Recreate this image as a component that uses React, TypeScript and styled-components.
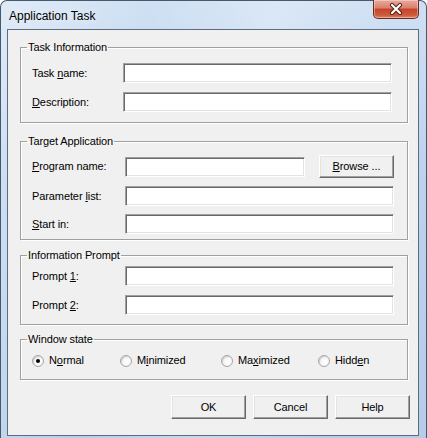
import React from 'react';
import styled, { createGlobalStyle } from 'styled-components';

const GlobalStyle = createGlobalStyle`
  html, body {
    margin: 0;
    padding: 0;
    background: #ffffff;
  }
`;

const Frame = styled.div`
  width: 427px;
  height: 438px;
  box-sizing: border-box;
  display: flex;
  flex-direction: column;
  padding: 0 7px 2px 6px;
  border: 1px solid #44586e;
  border-bottom: none;
  border-radius: 7px 7px 0 0;
  background:
    linear-gradient(100deg, rgba(255, 255, 255, 0.35) 0%, rgba(255, 255, 255, 0) 30%, rgba(255, 255, 255, 0.25) 55%, rgba(255, 255, 255, 0) 80%),
    linear-gradient(180deg, #cfe0f3 0%, #bcd3ee 40%, #b6cdea 100%);
  font-family: "Liberation Sans", Arial, sans-serif;
`;

const TitleBar = styled.div`
  height: 28px;
  display: flex;
  align-items: flex-start;
  justify-content: space-between;
`;

const Title = styled.span`
  margin: 8px 0 0 2px;
  font-size: 12px;
  line-height: 14px;
  color: #000;
  text-shadow: 0 0 8px rgba(255, 255, 255, 0.9);
`;

const CloseButton = styled.div`
  width: 44px;
  height: 18px;
  margin: -1px 0 0 0;
  display: flex;
  align-items: center;
  justify-content: center;
  border: 1px solid #6b2b20;
  border-top: none;
  border-radius: 0 0 5px 5px;
  background: linear-gradient(180deg, #e9a99c 0%, #d9806c 45%, #c6422a 50%, #cf5b3c 85%, #e0876a 100%);
  box-shadow: inset 0 0 0 1px rgba(255, 255, 255, 0.35);
`;

const Client = styled.div`
  flex: 1;
  display: flex;
  flex-direction: column;
  padding: 0 10px 0 12px;
  border: 1px solid #5d6c7e;
  background: #f0f0f0;
  font-size: 11px;
  letter-spacing: -0.1px;
  color: #000;
`;

const Group = styled.fieldset<{ $top: number; $pt: number; $pb: number; $pr: number }>`
  margin: ${(p) => p.$top}px 0 0 0;
  padding: ${(p) => p.$pt}px ${(p) => p.$pr}px ${(p) => p.$pb}px 11px;
  min-width: 0;
  border: 1px solid #a0a0a0;
  box-shadow: inset 1px 1px 0 #ffffff, 1px 1px 0 #ffffff;
  display: flex;
  flex-direction: column;
`;

const Legend = styled.legend`
  margin-left: -5px;
  padding: 0 1px;
  font-size: 11px;
  line-height: 13px;
`;

const Row = styled.div<{ $label: number; $gap?: number; $h?: number }>`
  display: grid;
  grid-template-columns: ${(p) => p.$label}px 1fr;
  align-items: center;
  height: ${(p) => p.$h ?? 20}px;
  margin-top: ${(p) => p.$gap ?? 0}px;
`;

const Label = styled.label`
  line-height: 13px;
  white-space: nowrap;
`;

const Field = styled.div`
  display: flex;
  align-items: center;
  gap: 14px;
`;

const Input = styled.div`
  flex: 1;
  height: 20px;
  box-sizing: border-box;
  background: #ffffff;
  border: 1px solid;
  border-color: #a0a0a0 #ffffff #ffffff #a0a0a0;
  box-shadow: inset 1px 1px 0 #696969, inset -1px -1px 0 #e3e3e3;
`;

const Button = styled.div<{ $w: number; $h: number }>`
  width: ${(p) => p.$w}px;
  height: ${(p) => p.$h}px;
  box-sizing: border-box;
  display: flex;
  align-items: center;
  justify-content: center;
  background: #f0f0f0;
  border: 1px solid;
  border-color: #ffffff #696969 #696969 #ffffff;
  box-shadow: inset -1px -1px 0 #a0a0a0, inset 1px 1px 0 #e3e3e3;
  line-height: 13px;
`;

const RadioRow = styled.div`
  display: grid;
  grid-template-columns: 88px 101px 97px 1fr;
  height: 13px;
  align-items: center;
`;

const RadioOption = styled.div`
  display: flex;
  align-items: center;
  gap: 5px;
  line-height: 13px;
`;

const RadioDot = styled.span<{ $on?: boolean }>`
  width: 12px;
  height: 12px;
  box-sizing: border-box;
  border-radius: 50%;
  display: inline-flex;
  align-items: center;
  justify-content: center;
  background: radial-gradient(circle at 60% 60%, #ffffff 0%, #f4f4f4 55%, #dcdcdc 100%);
  border: 1px solid #a7a7a7;
  box-shadow: inset 1px 1px 1px rgba(0, 0, 0, 0.12);

  &::after {
    content: '';
    width: 4px;
    height: 4px;
    border-radius: 50%;
    background: ${(p) => (p.$on ? '#000' : 'transparent')};
  }
`;

const ButtonBar = styled.div`
  display: flex;
  justify-content: flex-end;
  gap: 7px;
  margin: 15px -2px 0 0;
`;

const Key = styled.span`
  text-decoration: underline;
  text-underline-offset: 1px;
`;

const CloseGlyph = () => (
  <svg width="14" height="12" viewBox="0 0 14 12">
    <path d="M3 2 L11 10 M11 2 L3 10" stroke="#4a1c14" strokeWidth="4" strokeLinecap="round" />
    <path d="M3 2 L11 10 M11 2 L3 10" stroke="#ffffff" strokeWidth="2.2" strokeLinecap="round" />
  </svg>
);

const App: React.FC = () => {
  return (
    <>
      <GlobalStyle />
      <Frame>
        <TitleBar>
          <Title>Application Task</Title>
          <CloseButton>
            <CloseGlyph />
          </CloseButton>
        </TitleBar>
        <Client>
          <Group $top={11} $pt={9} $pb={10} $pr={15}>
            <Legend>Task Information</Legend>
            <Row $label={91}>
              <Label>Task <Key>n</Key>ame:</Label>
              <Input />
            </Row>
            <Row $label={91} $gap={9}>
              <Label><Key>D</Key>escription:</Label>
              <Input />
            </Row>
          </Group>

          <Group $top={12} $pt={7} $pb={5} $pr={13}>
            <Legend>Target Application</Legend>
            <Row $label={93} $h={23}>
              <Label><Key>P</Key>rogram name:</Label>
              <Field>
                <Input />
                <Button $w={75} $h={23}><span><Key>B</Key>rowse ...</span></Button>
              </Field>
            </Row>
            <Row $label={93} $gap={8}>
              <Label>Parameter <Key>l</Key>ist:</Label>
              <Input />
            </Row>
            <Row $label={93} $gap={8}>
              <Label><Key>S</Key>tart in:</Label>
              <Input />
            </Row>
          </Group>

          <Group $top={9} $pt={4} $pb={9} $pr={13}>
            <Legend>Information Prompt</Legend>
            <Row $label={93}>
              <Label>Prompt <Key>1</Key>:</Label>
              <Input />
            </Row>
            <Row $label={93} $gap={9}>
              <Label>Prompt <Key>2</Key>:</Label>
              <Input />
            </Row>
          </Group>

          <Group $top={8} $pt={8} $pb={12} $pr={13}>
            <Legend>Window state</Legend>
            <RadioRow>
              <RadioOption><RadioDot $on /><span>N<Key>o</Key>rmal</span></RadioOption>
              <RadioOption><RadioDot /><span>M<Key>i</Key>nimized</span></RadioOption>
              <RadioOption><RadioDot /><span>Ma<Key>x</Key>imized</span></RadioOption>
              <RadioOption><RadioDot /><span>Hidd<Key>e</Key>n</span></RadioOption>
            </RadioRow>
          </Group>

          <ButtonBar>
            <Button $w={75} $h={24}>OK</Button>
            <Button $w={75} $h={24}>Cancel</Button>
            <Button $w={75} $h={24}>Help</Button>
          </ButtonBar>
        </Client>
      </Frame>
    </>
  );
};

export default App;
